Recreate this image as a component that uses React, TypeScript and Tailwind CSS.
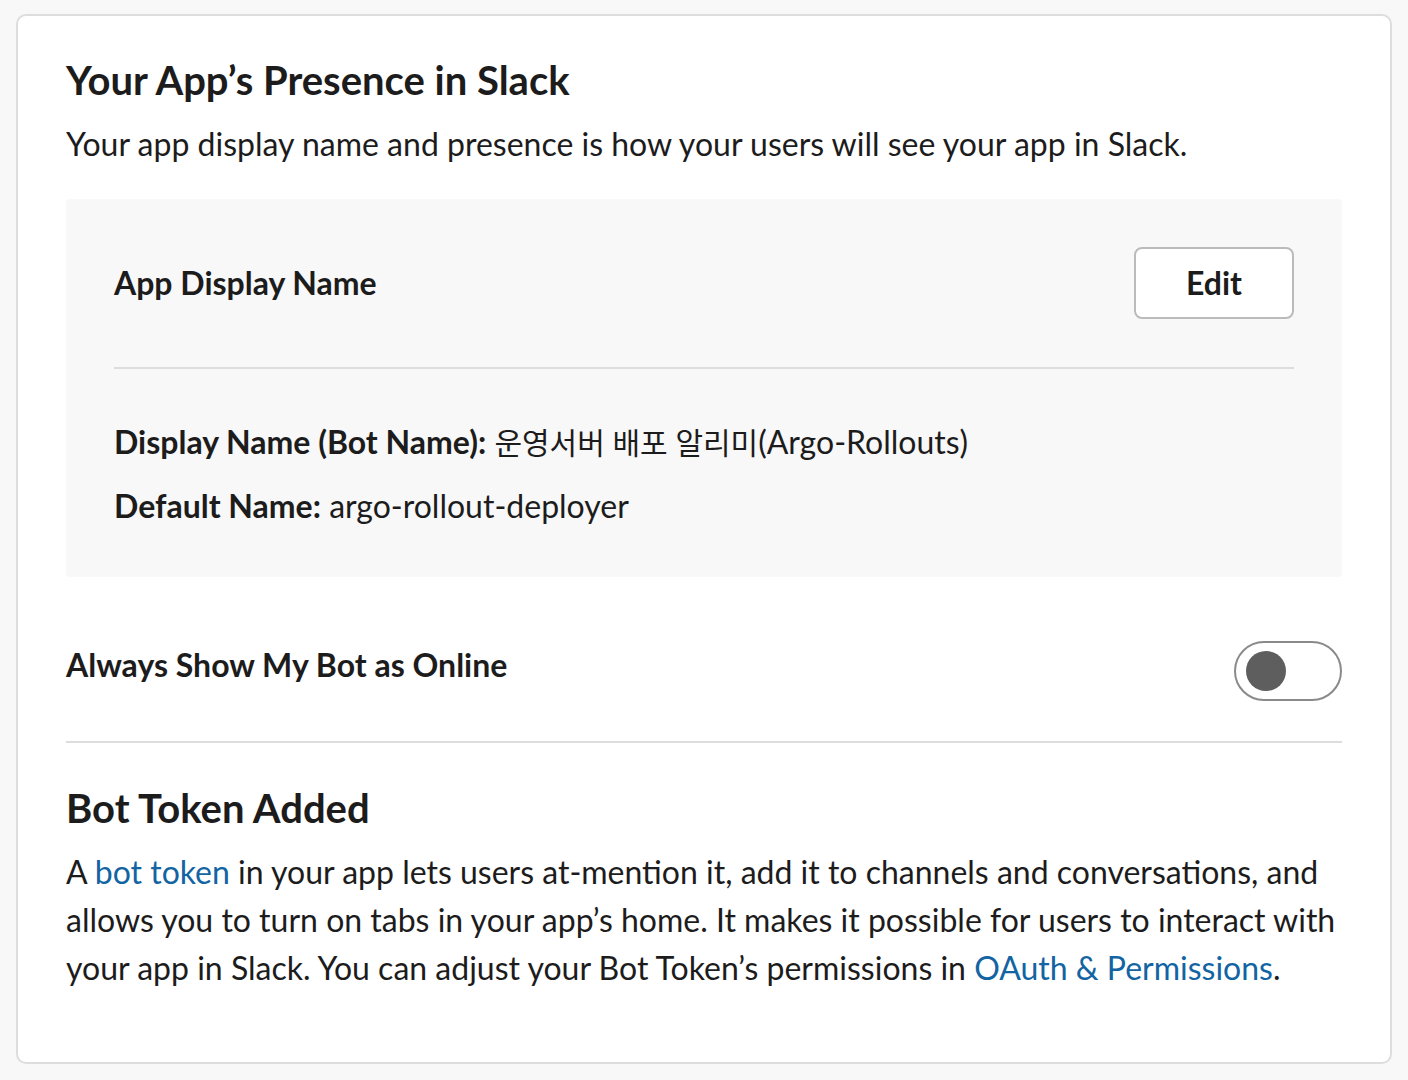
export default function App() {
  return (
    <div
      className="min-h-screen bg-[#f8f8f8] px-4 pt-[14px] pb-4 text-[#1d1c1d]"
      style={{ fontFamily: 'Lato, "Noto Sans CJK KR", sans-serif' }}
    >
      <div className="rounded-[10px] border-2 border-[#dddddd] bg-white px-[48px] pt-[36px] pb-[70px]">
        <h2 className="text-[40px] font-bold leading-[56px]">Your App’s Presence in Slack</h2>
        <p className="mt-[12px] text-[32px] leading-[48px]">
          Your app display name and presence is how your users will see your app in Slack.
        </p>

        <div className="mt-[31px] rounded-[4px] bg-[#f8f8f8] px-[48px] pt-[48px] pb-[47px]">
          <div className="flex items-center justify-between">
            <span className="text-[32px] font-bold">App Display Name</span>
            <button className="h-[72px] w-[160px] rounded-[8px] border-2 border-[#bbbbbb] bg-white text-[32px] font-bold">
              Edit
            </button>
          </div>
          <div className="mt-[48px] h-[2px] bg-[#dddddd]" />
          <p className="mt-[49px] text-[32px] leading-[48px]">
            <span className="font-bold">Display Name (Bot Name):</span>{' '}
            <span className="text-[30px]">운영서버 배포 알리미</span>(Argo-Rollouts)
          </p>
          <p className="mt-[16px] text-[32px] leading-[48px]">
            <span className="font-bold">Default Name:</span> argo-rollout-deployer
          </p>
        </div>

        <div className="mt-[64px] flex items-start justify-between">
          <span className="text-[32px] font-bold leading-[48px]">Always Show My Bot as Online</span>
          <div className="flex h-[60px] w-[108px] items-center rounded-full border-2 border-[#8a8a8a] bg-white pl-[10px]">
            <div className="h-[40px] w-[40px] rounded-full bg-[#5e5e5e]" />
          </div>
        </div>
        <div className="mt-[40px] h-[2px] bg-[#dddddd]" />

        <h2 className="mt-[37px] text-[40px] font-bold leading-[56px]">Bot Token Added</h2>
        <p className="mt-[12px] text-[32px] leading-[48px]">
          A <a className="text-[#1264a3]">bot token</a> in your app lets users at-mention it, add it to channels and
          conversations, and allows you to turn on tabs in your app’s home. It makes it possible for users to interact
          with your app in Slack. You can adjust your Bot Token’s permissions in{' '}
          <a className="text-[#1264a3]">OAuth &amp; Permissions</a>.
        </p>
      </div>
    </div>
  );
}
